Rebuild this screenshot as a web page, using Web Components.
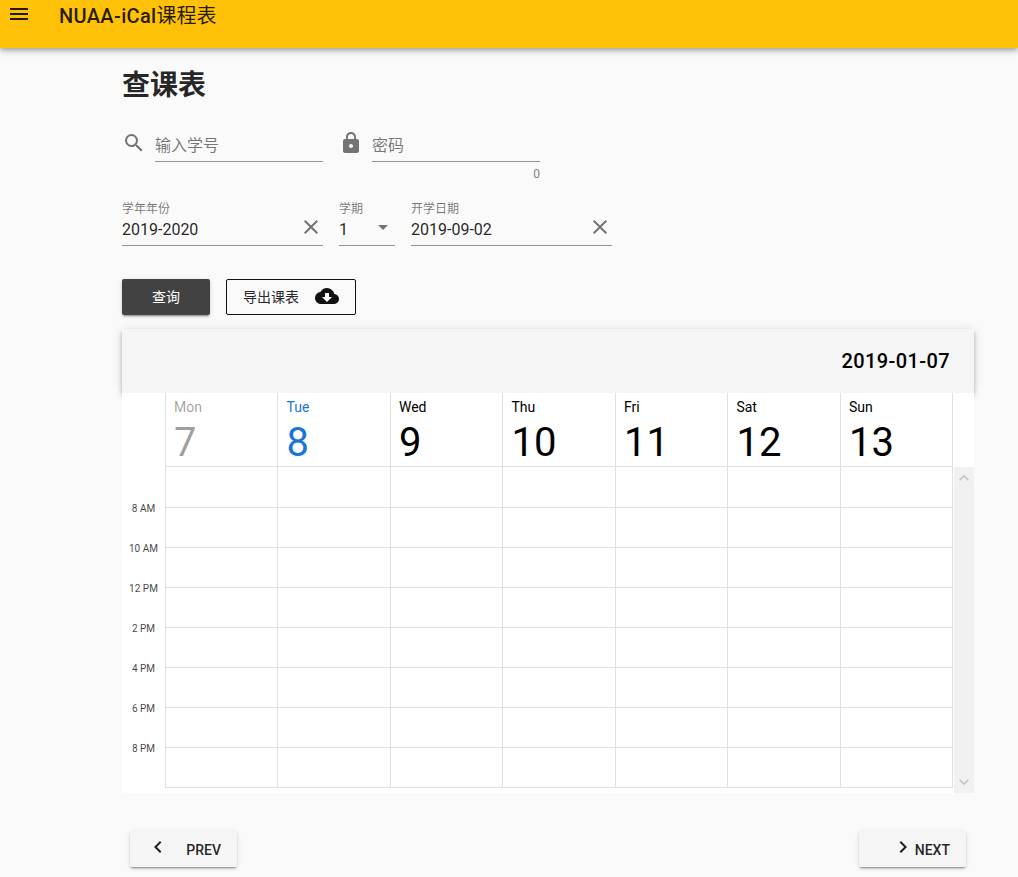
<!DOCTYPE html>
<html lang="zh">
<head>
<meta charset="utf-8">
<title>NUAA-iCal课程表</title>
<style>
  html, body { margin: 0; height: 877px; overflow: hidden; background: #fafafa; }
  body { font-family: Roboto, "Noto Sans CJK SC", sans-serif; color: rgba(0,0,0,.87); }
</style>
</head>
<body>
<app-shell></app-shell>

<script>
const ICONS = {
  menu: 'M3 18h18v-2H3v2zm0-5h18v-2H3v2zm0-7v2h18V6H3z',
  search: 'M15.5 14h-.79l-.28-.27A6.47 6.47 0 0 0 16 9.5 6.5 6.5 0 1 0 9.5 16c1.61 0 3.09-.59 4.23-1.57l.27.28v.79l5 4.99L20.49 19l-4.99-5zm-6 0C7.01 14 5 11.99 5 9.5S7.01 5 9.5 5 14 7.01 14 9.5 11.99 14 9.5 14z',
  lock: 'M18 8h-1V6c0-2.76-2.24-5-5-5S7 3.24 7 6v2H6c-1.1 0-2 .9-2 2v10c0 1.1.9 2 2 2h12c1.1 0 2-.9 2-2V10c0-1.1-.9-2-2-2zm-6 9c-1.1 0-2-.9-2-2s.9-2 2-2 2 .9 2 2-.9 2-2 2zm3.1-9H8.9V6c0-1.71 1.39-3.1 3.1-3.1s3.1 1.39 3.1 3.1v2z',
  close: 'M19 6.41 17.59 5 12 10.59 6.41 5 5 6.41 10.59 12 5 17.59 6.41 19 12 13.41 17.59 19 19 17.59 13.41 12z',
  cloud: 'M19.35 10.04A7.49 7.49 0 0 0 12 4C9.11 4 6.6 5.64 5.35 8.04A5.994 5.994 0 0 0 0 14c0 3.31 2.69 6 6 6h13c2.76 0 5-2.24 5-5 0-2.64-2.05-4.78-4.65-4.96zM17 13l-5 5-5-5h3V9h4v4h3z',
  left: 'M15.41 7.41 14 6l-6 6 6 6 1.41-1.41L10.83 12z',
  right: 'M10 6 8.59 7.41 13.17 12l-4.58 4.59L10 18l6-6z',
  up: 'M12 8l-6 6 1.41 1.41L12 10.83l4.59 4.58L18 14z',
  down: 'M16.59 8.59 12 13.17 7.41 8.59 6 10l6 6 6-6z'
};
const icon = (name, size, color) =>
  `<svg width="${size}" height="${size}" viewBox="0 0 24 24" fill="${color}" style="display:block;flex:none"><path d="${ICONS[name]}"/></svg>`;

class AppBar extends HTMLElement {
  constructor() {
    super();
    this.attachShadow({ mode: 'open' });
    this.shadowRoot.innerHTML = `
      <style>
        :host {
          display: flex;
          align-items: flex-start;
          height: 48px;
          background: #ffc107;
          box-shadow: 0 2px 4px -1px rgba(0,0,0,.2), 0 4px 5px 0 rgba(0,0,0,.14), 0 1px 10px 0 rgba(0,0,0,.12);
          position: relative;
          z-index: 2;
        }
        .menu { padding: 2px 0 0 7px; width: 52px; }
        .title { font-size: 20px; line-height: 32px; color: rgba(0,0,0,.87); white-space: nowrap; }
        b { font-weight: 500; letter-spacing: .35px; }
      </style>
      <div class="menu">${icon('menu', 24, 'rgba(0,0,0,.87)')}</div>
      <div class="title"><b>NUAA-iCal</b>课程表</div>
    `;
  }
}

class TextField extends HTMLElement {
  constructor() {
    super();
    this.attachShadow({ mode: 'open' });
    const label = this.getAttribute('label') || '';
    const value = this.getAttribute('value') || '';
    const placeholder = this.getAttribute('placeholder') || '';
    const width = this.getAttribute('width') || '168';
    const trail = this.getAttribute('trail');
    this.shadowRoot.innerHTML = `
      <style>
        :host { display: block; width: ${width}px; flex: none; }
        .label { font-size: 12px; line-height: 16px; height: 16px; color: rgba(0,0,0,.54); }
        .row {
          display: flex;
          align-items: center;
          justify-content: space-between;
          height: ${placeholder ? 31 : 28}px;
          border-bottom: 1px solid #949494;
          font-size: 16px;
          color: rgba(0,0,0,.87);
        }
        .ph { color: rgba(0,0,0,.54); padding-bottom: 4px; }
        .trail { margin-top: -8px; }
        .value { padding-bottom: 4px; }
      </style>
      ${label ? `<div class="label">${label}</div>` : ''}
      <div class="row">
        ${placeholder ? `<span class="ph">${placeholder}</span>` : `<span class="value">${value}</span>`}
        ${trail === 'close' ? `<span class="trail">${icon('close', 24, 'rgba(0,0,0,.54)')}</span>` : ''}
        ${trail === 'drop' ? `<svg class="trail" width="24" height="24" viewBox="0 0 24 24" fill="rgba(0,0,0,.54)"><path d="M7 10l5 5 5-5z"/></svg>` : ''}
      </div>
      <slot></slot>
    `;
  }
}

class WeekCalendar extends HTMLElement {
  constructor() {
    super();
    this.attachShadow({ mode: 'open' });
    const days = [['Mon', 7, 'past'], ['Tue', 8, 'today'], ['Wed', 9], ['Thu', 10], ['Fri', 11], ['Sat', 12], ['Sun', 13]];
    const times = ['8 AM', '10 AM', '12 PM', '2 PM', '4 PM', '6 PM', '8 PM'];
    let cells = '';
    for (let i = 0; i < 56; i++) cells += '<i></i>';
    this.shadowRoot.innerHTML = `
      <style>
        :host { display: block; width: 852px; }
        .bar {
          height: 64px;
          background: #f5f5f5;
          display: flex;
          align-items: center;
          justify-content: flex-end;
          padding-right: 24px;
          box-shadow: 0 2px 4px -1px rgba(0,0,0,.2), 0 4px 5px 0 rgba(0,0,0,.14), 0 1px 10px 0 rgba(0,0,0,.12);
          font-size: 20px;
          font-weight: 500;
          letter-spacing: .4px;
          color: #000;
          position: relative;
        }
        .head, .body { display: grid; grid-template-columns: 43px 788.4px 20.6px; background: #fff; position: relative; }
        .head { height: 74px; }
        .days { display: grid; grid-template-columns: repeat(7, 1fr); border-left: 1px solid #e0e0e0; border-bottom: 1px solid #e0e0e0; }
        .day { border-right: 1px solid #e0e0e0; padding: 6px 0 0 8px; color: #000; }
        .day .n { font-size: 14px; line-height: 16px; }
        .day .d { font-size: 40px; line-height: 46px; margin-top: 5px; }
        .past { color: rgba(0,0,0,.38); }
        .today { color: #1976d2; }
        .body { height: 326px; }
        .times { font-size: 10px; color: rgba(0,0,0,.75); text-align: center; padding-top: 22px; }
        .times div { height: 40px; line-height: 40px; width: 43px; }
        .grid {
          display: grid;
          grid-template-columns: repeat(7, 1fr);
          grid-template-rows: 41px repeat(7, 40px);
          height: 321px;
          border-left: 1px solid #e0e0e0;
        }
        .grid i { border-right: 1px solid #e0e0e0; border-bottom: 1px solid #e0e0e0; }
        .scroll {
          margin-left: .6px;
          background: #f1f1f1;
          display: flex;
          flex-direction: column;
          justify-content: space-between;
          align-items: center;
          padding: 1px 0;
        }
      </style>
      <div class="bar">2019-01-07</div>
      <div class="head">
        <div></div>
        <div class="days">
          ${days.map(([n, d, c]) => `<div class="day ${c || ''}"><div class="n">${n}</div><div class="d">${d}</div></div>`).join('')}
        </div>
        <div></div>
      </div>
      <div class="body">
        <div class="times">${times.map(t => `<div>${t}</div>`).join('')}</div>
        <div class="grid">${cells}</div>
        <div class="scroll">${icon('up', 20, '#c4c4c4')}${icon('down', 20, '#c4c4c4')}</div>
      </div>
    `;
  }
}

class PageButton extends HTMLElement {
  constructor() {
    super();
    this.attachShadow({ mode: 'open' });
    const dir = this.getAttribute('dir-icon');
    this.shadowRoot.innerHTML = `
      <style>
        :host {
          display: flex;
          align-items: center;
          width: 107px;
          height: 36px;
          box-sizing: border-box;
          background: #f5f5f5;
          border-radius: 2px;
          box-shadow: 0 3px 1px -2px rgba(0,0,0,.2), 0 2px 2px 0 rgba(0,0,0,.14), 0 1px 5px 0 rgba(0,0,0,.12);
          font-size: 14px;
          font-weight: 500;
          color: rgba(0,0,0,.87);
        }
        .wrap { display: flex; align-items: center; width: 100%; justify-content: space-between; padding: 0 16px; }
        .wrap.end { justify-content: flex-end; }
        span { padding-top: 1px; }
        svg { margin-top: -5px; }
      </style>
      <div class="wrap ${dir === 'right' ? 'end' : ''}">
        ${icon(dir, 24, 'rgba(0,0,0,.87)')}<span><slot></slot></span>
      </div>
    `;
  }
}

class AppShell extends HTMLElement {
  constructor() {
    super();
    this.attachShadow({ mode: 'open' });
    this.shadowRoot.innerHTML = `
      <style>
        :host { display: block; }
        main { padding: 0 44px 0 122px; }
        h1 { margin: 0; padding-top: 21px; font-size: 28px; line-height: 34px; font-weight: 700; color: rgba(0,0,0,.87); }
        .logins { display: flex; margin-top: 27px; height: 45px; }
        .login { display: flex; }
        .login .ic { width: 33px; padding-top: 1px; }
        .login + .login { margin-left: 16px; }
        .counter { font-size: 12px; line-height: 16px; text-align: right; margin-top: 4px; color: rgba(0,0,0,.54); }
        .filters { display: flex; gap: 16px; margin-top: 26px; }
        .actions { display: flex; gap: 16px; margin-top: 33px; }
        .btn {
          height: 36px;
          box-sizing: border-box;
          display: flex;
          align-items: center;
          font-size: 14px;
          border-radius: 2px;
        }
        .query { width: 88px; justify-content: center; padding-bottom: 2px; background: #424242; color: #fff; box-shadow: 0 3px 1px -2px rgba(0,0,0,.2), 0 2px 2px 0 rgba(0,0,0,.14), 0 1px 5px 0 rgba(0,0,0,.12); }
        .export { width: 130px; padding: 0 0 2px 16px; border: 1px solid #111; color: rgba(0,0,0,.87); gap: 16px; }
        week-calendar { margin-top: 14px; }
        .pager { display: flex; justify-content: space-between; padding: 0 8px; margin-top: 38px; }
      </style>
      <app-bar></app-bar>
      <main>
        <h1>查课表</h1>
        <div class="logins">
          <div class="login">
            <div class="ic">${icon('search', 24, 'rgba(0,0,0,.54)')}</div>
            <text-field placeholder="输入学号"></text-field>
          </div>
          <div class="login">
            <div class="ic">${icon('lock', 24, 'rgba(0,0,0,.54)')}</div>
            <text-field placeholder="密码"><div class="counter">0</div></text-field>
          </div>
        </div>
        <div class="filters">
          <text-field label="学年年份" value="2019-2020" width="201" trail="close"></text-field>
          <text-field label="学期" value="1" width="56" trail="drop"></text-field>
          <text-field label="开学日期" value="2019-09-02" width="201" trail="close"></text-field>
        </div>
        <div class="actions">
          <div class="btn query">查询</div>
          <div class="btn export">导出课表${icon('cloud', 24, '#111')}</div>
        </div>
        <week-calendar></week-calendar>
        <div class="pager">
          <page-button dir-icon="left">PREV</page-button>
          <page-button dir-icon="right">NEXT</page-button>
        </div>
      </main>
    `;
  }
}

customElements.define('app-bar', AppBar);
customElements.define('text-field', TextField);
customElements.define('week-calendar', WeekCalendar);
customElements.define('page-button', PageButton);
customElements.define('app-shell', AppShell);
</script>
</body>
</html>
